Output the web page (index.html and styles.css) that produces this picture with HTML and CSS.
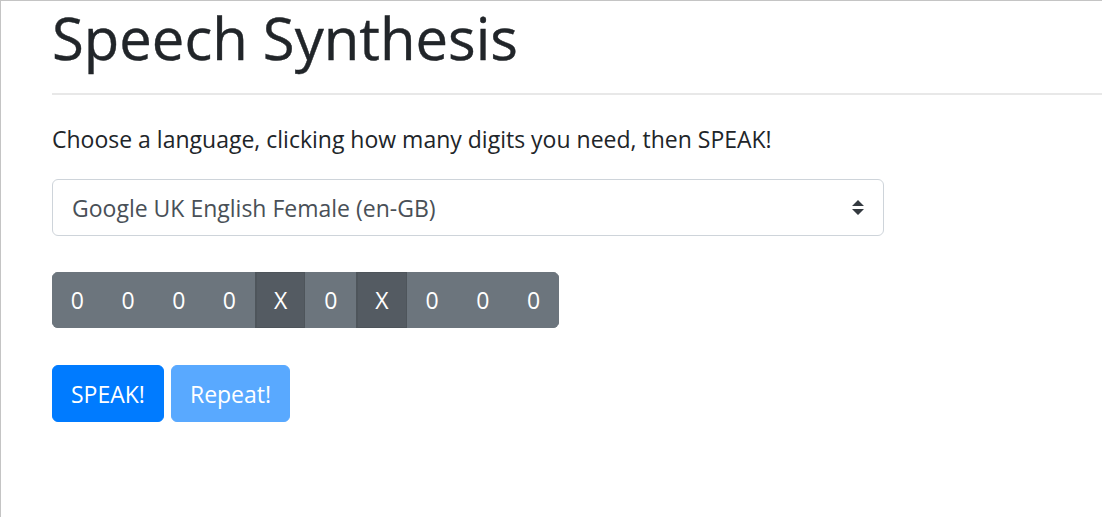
FILE: index.html
```html
<!DOCTYPE html>
<html lang="en">
<head>
<meta charset="utf-8">
<title>Speech Synthesis</title>
<link rel="stylesheet" href="styles.css">
</head>
<body>
<div class="frame">
  <div class="container">
    <h1 class="title">Speech Synthesis</h1>
    <hr class="rule">
    <p class="lead-text">Choose a language, clicking how many digits you need, then SPEAK!</p>
    <div class="select">
      <span class="select-value">Google UK English Female (en-GB)</span>
      <svg class="select-arrow" width="12" height="15" viewBox="0 0 4 5" aria-hidden="true"><path d="M2 0L0 2h4zm0 5L0 3h4z" fill="#343a40"/></svg>
    </div>
    <div class="digits">
      <button class="digit">0</button>
      <button class="digit">0</button>
      <button class="digit">0</button>
      <button class="digit">0</button>
      <button class="digit active">X</button>
      <button class="digit">0</button>
      <button class="digit active">X</button>
      <button class="digit">0</button>
      <button class="digit">0</button>
      <button class="digit">0</button>
    </div>
    <div class="actions">
      <button class="btn btn-primary">SPEAK!</button>
      <button class="btn btn-primary disabled">Repeat!</button>
    </div>
  </div>
</div>
</body>
</html>
```
FILE: styles.css
```css
html, body {
  margin: 0;
  padding: 0;
  background: #fff;
}
body {
  font-family: "Open Sans", "Noto Sans", sans-serif;
  color: #212529;
  width: 1102px;
  height: 518px;
  overflow: hidden;
}
.frame {
  border-top: 1px solid #c4c4c4;
  border-left: 1px solid #c4c4c4;
  height: 517px;
  box-sizing: border-box;
}
.container {
  padding-left: 51px;
  display: flex;
  flex-direction: column;
  align-items: flex-start;
}
.title {
  font-size: 58px;
  font-weight: 400;
  line-height: 80px;
  margin: -3px 0 0 0;
  -webkit-text-stroke: 0.4px #212529;
}
.rule {
  align-self: stretch;
  border: 0;
  border-top: 2px solid #e8e8e8;
  margin: 15px 0 0 0;
  height: 0;
}
.lead-text {
  font-size: 23px;
  line-height: 36px;
  margin: 26px 0 0 0;
}
.select {
  margin-top: 22px;
  width: 832px;
  height: 57px;
  box-sizing: border-box;
  border: 1px solid #ced4da;
  border-radius: 6px;
  display: flex;
  align-items: center;
  justify-content: space-between;
  padding: 0 19px 0 19px;
  color: #495057;
  font-size: 23px;
}
.select-arrow {
  display: block;
}
.digits {
  margin-top: 36px;
  display: grid;
  grid-template-columns: repeat(10, 50.7px);
  height: 56px;
  border-radius: 6px;
  overflow: hidden;
}
.digit {
  font-family: inherit;
  font-size: 23px;
  color: #fff;
  background: #6c757d;
  border: 1px solid #6c757d;
  margin: 0;
  padding: 0;
  display: flex;
  align-items: center;
  justify-content: center;
}
.digit.active {
  background: #545b62;
  border-color: #4e555b;
  border-left-width: 2px;
}
.actions {
  margin-top: 37px;
  display: flex;
  gap: 7px;
}
.btn {
  font-family: inherit;
  font-size: 23px;
  height: 57px;
  padding: 0 18px;
  border-radius: 6px;
  border: 1px solid #007bff;
  background: #007bff;
  color: #fff;
}
.btn.disabled {
  background: #59a9ff;
  border-color: #59a9ff;
}
```
